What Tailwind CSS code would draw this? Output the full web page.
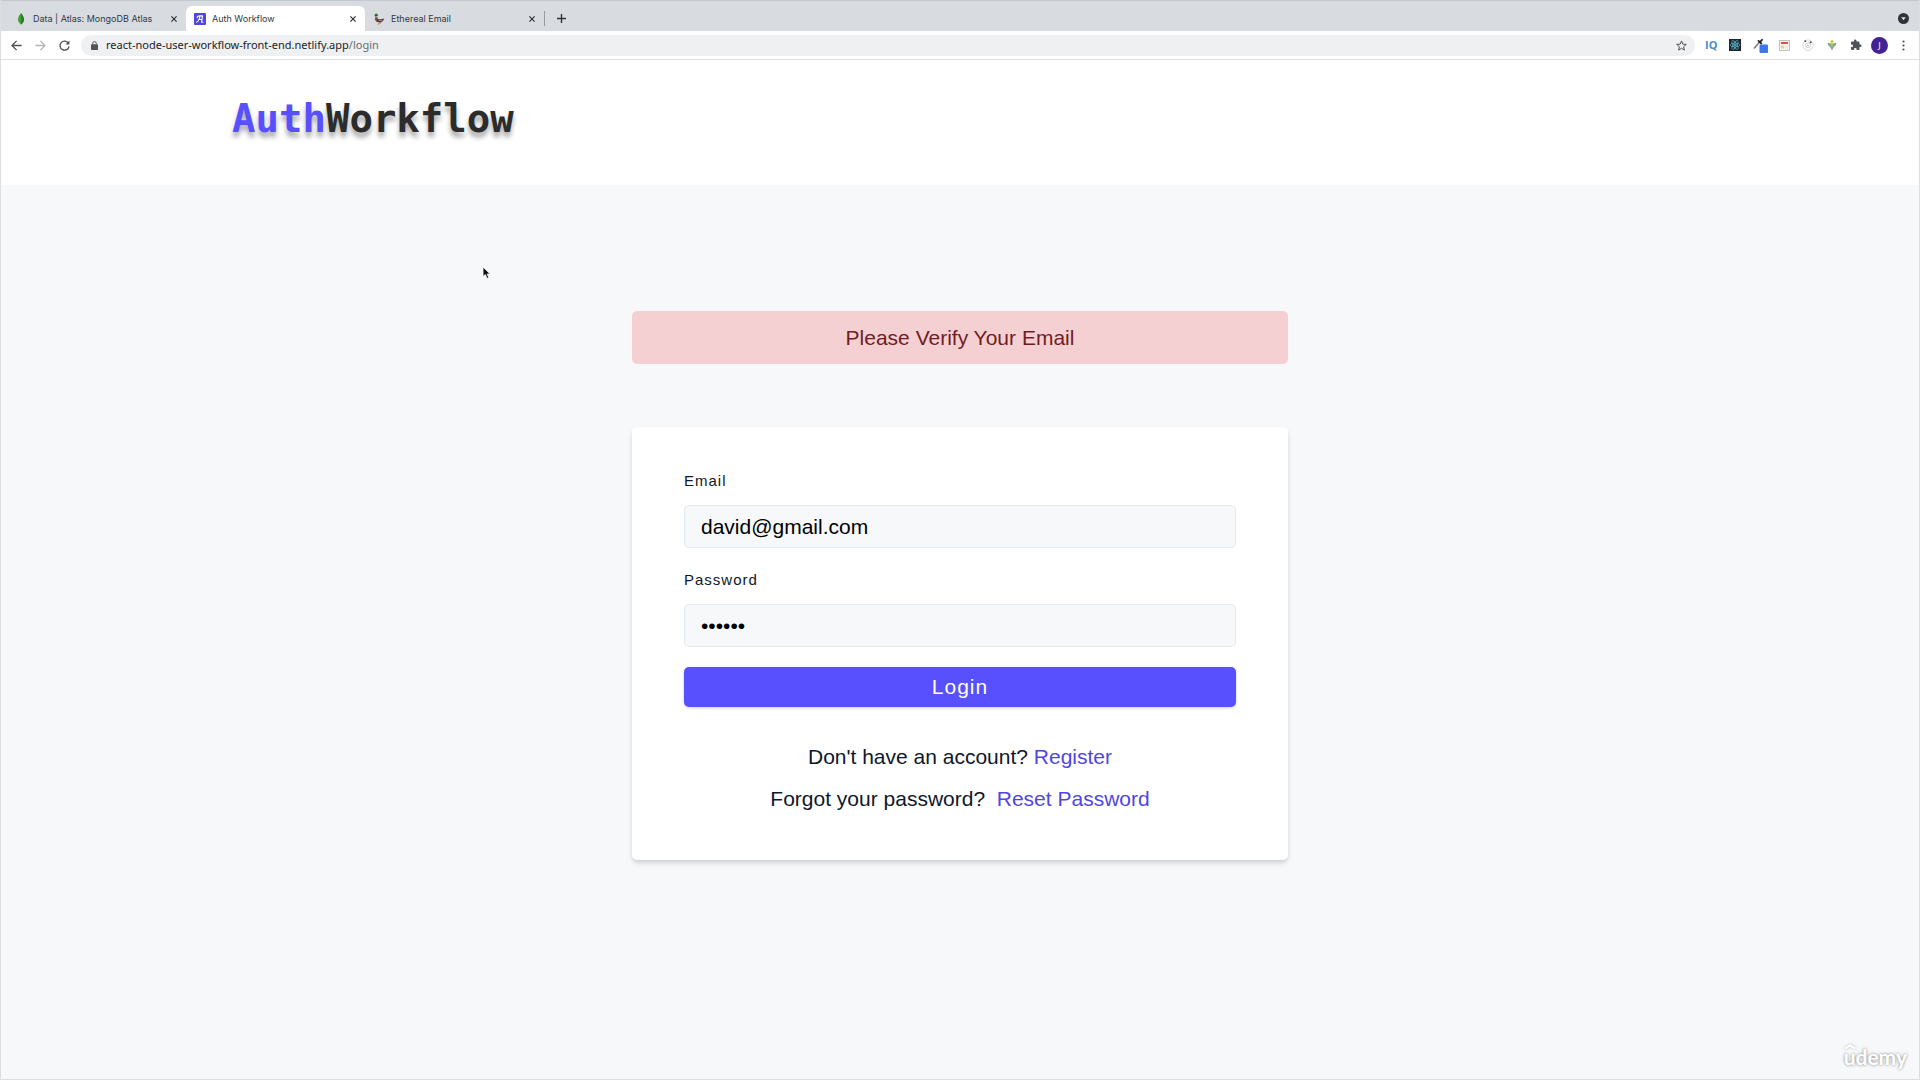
<!DOCTYPE html>
<html lang="en">
<head>
<meta charset="utf-8">
<title>Auth Workflow</title>
<script src="https://cdn.jsdelivr.net/npm/@tailwindcss/browser@4"></script>
</head>
<body class="relative flex min-h-screen flex-col overflow-x-hidden border-x border-b border-[#dcdee1] bg-[#f7f8fa] font-['Liberation_Sans',Arial,sans-serif] text-[21px] text-[#0f172a]">

<!-- Browser tabs -->
<div class="flex h-[31px] items-end border-t border-[#c4c8cc] bg-[#d8dce1] pl-[6px] font-['Inter',sans-serif] text-[9px] text-[#35383b]">
  <div class="flex h-[25px] w-[179px] items-center gap-[6px] pr-[7px] pl-2">
    <svg class="size-3" viewBox="0 0 12 12"><path d="M6 0C4.500 2 3 4 3 6.500S4.600 10.500 5.700 11.200L6 12l.3-.8C7.500 10.500 9 9 9 6.500S7.500 2 6 0z" fill="#3fa037"/><path d="M6 0v12l.3-.8C7.500 10.500 9 9 9 6.500S7.500 2 6 0z" fill="#2f7f2d"/></svg>
    <span class="flex-1 whitespace-nowrap">Data | Atlas: MongoDB Atlas</span>
    <button aria-label="Close tab" class="p-[2px]"><svg class="size-[6px]" viewBox="0 0 6 6" stroke="#303336" stroke-width="1.200"><path d="M.4.4l5.200 5.200M5.600.4L.4 5.600"/></svg></button>
  </div>
  <div class="flex h-[25px] w-[179px] items-center gap-[6px] rounded-t-md bg-white pr-[7px] pl-2">
    <svg class="size-3" viewBox="0 0 12 12"><rect width="12" height="12" rx="1" fill="#4f46e5"/><path d="M2.500 9.200C4.500 9 5 6 6.200 2.900H8.500L7.600 9.200h1.300M4.900 6.500h2.900M3.200 4.800C2.900 3.300 4.200 2.700 6.200 2.900" fill="none" stroke="#fff" stroke-width="1.100" stroke-linecap="round" stroke-linejoin="round"/></svg>
    <span class="flex-1 whitespace-nowrap">Auth Workflow</span>
    <button aria-label="Close tab" class="p-[2px]"><svg class="size-[6px]" viewBox="0 0 6 6" stroke="#303336" stroke-width="1.200"><path d="M.4.4l5.200 5.200M5.600.4L.4 5.600"/></svg></button>
  </div>
  <div class="flex h-[25px] w-[179px] items-center gap-[6px] pr-[7px] pl-2">
    <svg class="size-3" viewBox="0 0 12 12"><path d="M2.200 3.500h1.900C4.500 5 4.600 6 5.800 6.200c2 .2 3.300-.4 5.400-.7-.6 2.600-2.500 3.900-4.700 3.900C3.600 9.400 1.600 7.700 2.200 5z" fill="#4f3d3a"/><path d="M5 6.700c1.800.8 3.400.4 5 0-1 1.500-3.500 2-5 0z" fill="#a8958e"/><circle cx="3.200" cy="2.200" r="1.600" fill="#187044"/><path d="M1.800 1.900L.3 2.900l1.700.4z" fill="#dba83c"/><path d="M2.300 3.700l1.800-.2.200.7-1.900.3z" fill="#f2f2f2"/><path d="M2.200 5c.2 1.800 1 3 2.300 3.600L4 5.500z" fill="#7e4a41"/><path d="M6 9.300v1.800H4.700M7.500 9.300v1.400" fill="none" stroke="#c9643a" stroke-width=".8"/></svg>
    <span class="flex-1 whitespace-nowrap">Ethereal Email</span>
    <button aria-label="Close tab" class="p-[2px]"><svg class="size-[6px]" viewBox="0 0 6 6" stroke="#303336" stroke-width="1.200"><path d="M.4.4l5.200 5.200M5.600.4L.4 5.600"/></svg></button>
  </div>
  <div class="flex h-[25px] flex-1 items-center">
    <span class="h-[15px] w-px bg-[#96999d]"></span>
    <button aria-label="New tab" class="ml-3"><svg class="size-[9px]" viewBox="0 0 9 9" stroke="#303336" stroke-width="1.400"><path d="M4.500 0v9M0 4.500h9"/></svg></button>
    <button aria-label="Search tabs" class="mr-[10px] ml-auto"><svg class="size-[11px]" viewBox="0 0 11 11"><circle cx="5.500" cy="5.500" r="5.500" fill="#303438"/><path d="M3.200 4.200h4.600L5.500 7.300z" fill="#dfe2e6"/></svg></button>
  </div>
</div>

<!-- Address bar -->
<div class="flex h-[29px] items-center border-b border-[#e0e1e3] bg-white px-[10px] font-['Noto_Sans',sans-serif] text-[11px]">
  <div class="flex w-[70px] items-center gap-[13px]">
    <button aria-label="Back"><svg class="size-[11px]" viewBox="0 0 11 11" fill="none" stroke="#4c4f53" stroke-width="1.300"><path d="M10.500 5.500H1.200M5.600.9L1 5.500l4.600 4.600"/></svg></button>
    <button aria-label="Forward"><svg class="size-[11px]" viewBox="0 0 11 11" fill="none" stroke="#b2b4b7" stroke-width="1.300"><path d="M.5 5.500h9.300M5.400.9L10 5.500l-4.600 4.600"/></svg></button>
    <button aria-label="Reload"><svg class="size-[11px]" viewBox="0 0 11 11" fill="none" stroke="#4c4f53" stroke-width="1.300"><path d="M9.400 3.300A4.500 4.500 0 1 0 10 6.300"/><path d="M10.400.4v4H6.600z" fill="#4c4f53" stroke="none"/></svg></button>
  </div>
  <div class="flex h-[21px] flex-1 items-center rounded-full bg-[#eff0f1] pr-2 pl-[10px]">
    <svg class="mr-2 h-[9px] w-[7px]" viewBox="0 0 7 9"><rect y="3.300" width="7" height="5.700" rx=".7" fill="#505357"/><path d="M1.700 3.600V2.400a1.800 1.800 0 0 1 3.600 0v1.200" fill="none" stroke="#505357"/></svg>
    <span class="flex-1 text-[#202326]">react-node-user-workflow-front-end.netlify.app<span class="text-[#6a6d70]">/login</span></span>
    <button aria-label="Bookmark"><svg class="size-[11px]" viewBox="0 0 11 11"><path d="M5.500.9l1.300 3.200 3.500.3-2.700 2.300.8 3.400-2.900-1.800-2.900 1.800.8-3.400L.7 4.400l3.500-.3z" fill="none" stroke="#505357"/></svg></button>
  </div>
  <div class="ml-[10px] flex items-center gap-3">
    <button aria-label="IQ extension" class="w-3 font-['Open_Sans',sans-serif] text-[11px] font-bold text-[#4a8cc8]">IQ</button>
    <button aria-label="React tools"><svg class="size-3" viewBox="0 0 12 12"><rect width="12" height="12" fill="#20242b"/><g fill="none" stroke="#55b9d2" stroke-width=".7"><ellipse cx="6" cy="6" rx="5" ry="1.900"/><ellipse cx="6" cy="6" rx="5" ry="1.900" transform="rotate(60 6 6)"/><ellipse cx="6" cy="6" rx="5" ry="1.900" transform="rotate(120 6 6)"/></g><circle cx="6" cy="6" r="1" fill="#55b9d2"/></svg></button>
    <button aria-label="Color picker" class="-mr-px"><svg class="h-4 w-[15px]" viewBox="0 0 15 16"><path d="M1 11.500L6.500 5" stroke="#77797b" stroke-width="1.500"/><path d="M5.500 3.900l2.800 2.600M6.800 5.300L9 2.800" stroke="#222" stroke-width="1.800" stroke-linecap="round"/><rect x="6.500" y="7.500" width="8.500" height="8.500" rx="1" fill="#3878e8"/></svg></button>
    <button aria-label="Page notes"><svg class="size-[11px]" viewBox="0 0 11 11"><rect x=".5" y=".5" width="10" height="10" fill="#f7f4ee" stroke="#c5c2bd"/><path d="M2 2h7v2H2z" fill="#e64b46"/><path d="M2 5.500h3v3H2z" fill="#d2dfa0"/><path d="M6 5.500h3v3H6z" fill="#f1eae4"/></svg></button>
    <button aria-label="Orbit extension"><svg class="size-3" viewBox="0 0 12 12" fill="none" stroke="#c4c6c7"><circle cx="6" cy="6.200" r="5.200" stroke-width=".7"/><circle cx="6" cy="6.200" r="2.500" stroke-width=".8"/><g fill="#46494b" stroke="none"><circle cx="3.300" cy="2.200" r=".9"/><circle cx="8.600" cy="3.200" r="1"/><circle cx="6" cy="6.200" r=".5"/></g></svg></button>
    <button aria-label="Plant extension"><svg class="size-3" viewBox="0 0 12 12"><path d="M6 .5l2 2-2 2.300-2-2.300z" fill="#d9c940"/><path d="M1.500 3.800L5.700 4.600l.2 4.200C3.200 8 2 6.500 1.500 3.800zM10.500 3.800L6.300 4.600l-.2 4.200C8.800 8 10 6.500 10.500 3.800z" fill="#83a978"/><path d="M4 7.500l2 .7 2-.7-2 4z" fill="#8999a0"/></svg></button>
    <button aria-label="Extensions"><svg class="size-3" viewBox="0 0 24 24"><path d="M20.500 11H19V7a2 2 0 0 0-2-2h-4V3.500a2.500 2.500 0 0 0-5 0V5H4a2 2 0 0 0-2 2v3.800h1.500a2.700 2.700 0 0 1 0 5.400H2V20a2 2 0 0 0 2 2h3.800v-1.500a2.700 2.700 0 0 1 5.400 0V22H17a2 2 0 0 0 2-2v-4h1.500a2.500 2.500 0 0 0 0-5z" fill="#505357"/></svg></button>
    <button aria-label="Profile" class="-mx-[3px] size-[17px] rounded-full bg-[#432293] text-center text-[9px] leading-[17px] text-white">J</button>
    <button aria-label="Menu" class="w-3"><svg class="mx-auto h-[11px] w-[3px]" viewBox="0 0 3 11" fill="#505357"><circle cx="1.500" cy="1.500" r="1.100"/><circle cx="1.500" cy="5.500" r="1.100"/><circle cx="1.500" cy="9.500" r="1.100"/></svg></button>
  </div>
</div>

<!-- Site header -->
<nav class="flex h-[125px] justify-center bg-white">
  <div class="w-full max-w-[1456px]">
    <a href="/" class="mt-[35px] block w-fit font-['DejaVu_Sans_Mono',monospace] text-[39px] leading-[48px] font-bold text-[#2c2c2c] text-shadow-[0_5px_5px_rgb(0_0_0/0.35)]"><span class="text-[#584fff]">Auth</span>Workflow</a>
  </div>
</nav>

<main class="mx-auto flex w-full max-w-[656px] flex-col pt-[126px] pb-16">
  <div role="alert" class="mb-[63px] rounded-[5px] bg-[#f5d0d3] text-center leading-[53px] text-[#721c24]">Please Verify Your Email</div>
  <form class="flex flex-col rounded-[5px] bg-white px-[52px] pt-[42px] pb-10 shadow-[0_4px_6px_-1px_rgb(0_0_0/0.12),0_2px_4px_-1px_rgb(0_0_0/0.1)]">
    <label for="email" class="mb-3 text-[15px] leading-6 tracking-[1px]">Email</label>
    <input id="email" type="email" value="david@gmail.com" class="mb-5 h-[43px] rounded-[5px] border border-[#e2e8ef] bg-[#f7f8fa] px-4 text-black">
    <label for="password" class="mb-3 text-[15px] leading-6 tracking-[1px]">Password</label>
    <input id="password" type="password" value="secret" class="mb-5 h-[43px] rounded-[5px] border border-[#e2e8ef] bg-[#f7f8fa] px-4 text-black">
    <button type="button" class="mb-[29px] h-10 rounded-[5px] bg-[#584fff] tracking-[1px] text-white shadow-[0_1px_3px_rgb(0_0_0/0.2)]">Login</button>
    <p class="text-center leading-[42px]">Don't have an account? <a href="/register" class="text-[#5146e0]">Register</a></p>
    <p class="text-center leading-[42px]">Forgot your password?&nbsp; <a href="/forgot-password" class="text-[#5146e0]">Reset Password</a></p>
  </form>
</main>

<!-- Watermark and pointer lie over the page -->
<div class="absolute right-[12px] bottom-[8px] font-['Lato',sans-serif] text-[21px] leading-7 font-bold text-white text-shadow-[0_0_3px_rgb(0_0_0/0.5)]">
  <svg class="absolute top-0 left-px h-[6px] w-[10px] overflow-visible drop-shadow-[0_0_1px_rgb(0_0_0/0.3)]" viewBox="0 0 10 6" fill="none" stroke="#fff" stroke-width="2.500"><path d="M0 5.500l5-3 5 3"/></svg>udemy
</div>
<svg class="absolute top-[266px] left-[481px] h-[14px] w-[10px]" viewBox="0 0 10 14"><path d="M1 1v9.500l2.300-2 1.700 4 1.800-.8-1.600-3.700h3z" fill="#111" stroke="#fff" stroke-width=".8"/></svg>
</body>
</html>
